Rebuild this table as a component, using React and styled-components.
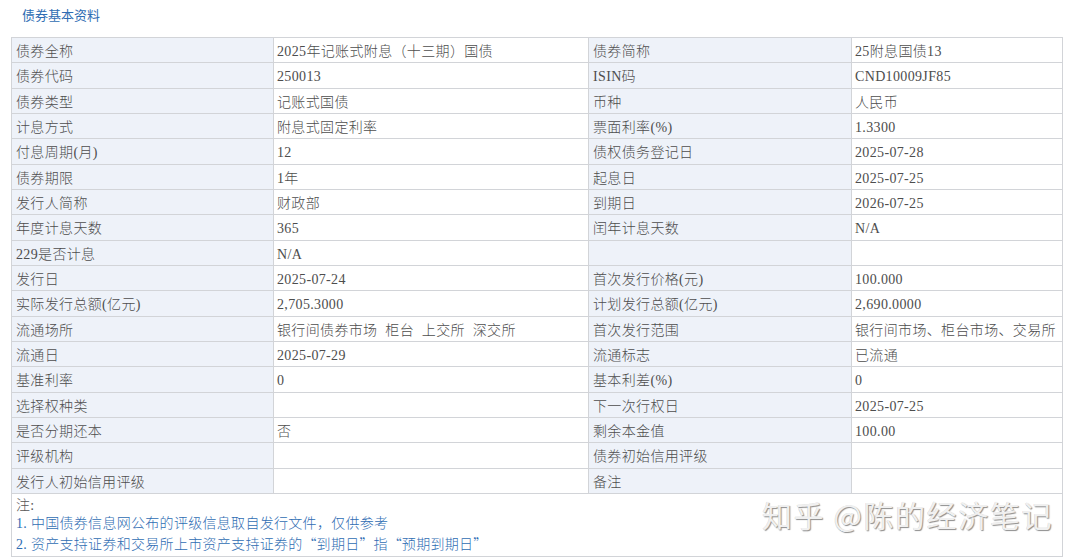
import React from "react";
import styled, { createGlobalStyle } from "styled-components";

const Global = createGlobalStyle`
  html, body { margin: 0; padding: 0; background: #fff; }
  body { font-family: "Liberation Serif", "Noto Sans CJK SC", serif; }
`;

const Page = styled.div`
  position: relative;
  width: 1080px;
  height: 560px;
  padding: 6px 0 0 11px;
  box-sizing: border-box;
`;

const Title = styled.div`
  font-family: "Noto Sans CJK SC", sans-serif;
  font-size: 13px;
  line-height: 18px;
  color: #2f6db3;
  padding-left: 11px;
  height: 31px;
`;

const Table = styled.table`
  border-collapse: collapse;
  table-layout: fixed;
  width: 1051px;
  font-size: 14px;
  color: #4d4d4d;
`;

const Row = styled.tr`
  height: 25.33px;
`;

const Cell = styled.td`
  border: 1px solid #d2d4d8;
  padding: 3px 0 0 ${(p) => (p.$label ? "4px" : "3px")};
  height: 21.33px;
  line-height: 21px;
  vertical-align: middle;
  white-space: nowrap;
  overflow: hidden;
  font-family: "Liberation Serif", "Noto Sans CJK SC", serif;
  font-size: 14px;
  font-weight: 300;
  letter-spacing: 0.35px;
  word-spacing: 4px;
  background: ${(p) => (p.$label ? "#eef2f9" : "#ffffff")};
`;

const NoteCell = styled.td`
  border: 1px solid #d2d4d8;
  padding: 3px 4px 2px;
  height: 55px;
  vertical-align: top;
  font-family: "Liberation Serif", "Noto Sans CJK SC", serif;
  font-size: 14px;
  font-weight: 300;
  line-height: 18.5px;
`;

const NoteLine = styled.div`
  color: ${(p) => (p.$blue ? "#2f6db3" : "#555")};
  letter-spacing: 0.3px;
  white-space: nowrap;
`;

const Quote = styled.span`
  font-family: "Noto Sans CJK SC", sans-serif;
  display: inline-block;
  width: 14px;
  text-align: ${(p) => (p.$open ? "right" : "left")};
`;

const Watermark = styled.div`
  position: absolute;
  right: 27px;
  top: 494px;
  font-family: "Noto Sans CJK SC", sans-serif;
  font-size: 30px;
  line-height: 40px;
  color: #f0f0f0;
  text-shadow: 1px 1px 1px rgba(0, 0, 0, 0.45), -0.5px -0.5px 0 rgba(0, 0, 0, 0.15);
  letter-spacing: 1.6px;
  white-space: pre;
`;

const rows = [
  ["债券全称", "2025年记账式附息（十三期）国债", "债券简称", "25附息国债13"],
  ["债券代码", "250013", "ISIN码", "CND10009JF85"],
  ["债券类型", "记账式国债", "币种", "人民币"],
  ["计息方式", "附息式固定利率", "票面利率(%)", "1.3300"],
  ["付息周期(月)", "12", "债权债务登记日", "2025-07-28"],
  ["债券期限", "1年", "起息日", "2025-07-25"],
  ["发行人简称", "财政部", "到期日", "2026-07-25"],
  ["年度计息天数", "365", "闰年计息天数", "N/A"],
  ["229是否计息", "N/A", "", ""],
  ["发行日", "2025-07-24", "首次发行价格(元)", "100.000"],
  ["实际发行总额(亿元)", "2,705.3000", "计划发行总额(亿元)", "2,690.0000"],
  ["流通场所", "银行间债券市场 柜台 上交所 深交所", "首次发行范围", "银行间市场、柜台市场、交易所"],
  ["流通日", "2025-07-29", "流通标志", "已流通"],
  ["基准利率", "0", "基本利差(%)", "0"],
  ["选择权种类", "", "下一次行权日", "2025-07-25"],
  ["是否分期还本", "否", "剩余本金值", "100.00"],
  ["评级机构", "", "债券初始信用评级", ""],
  ["发行人初始信用评级", "", "备注", ""],
];

export default function App() {
  return (
    <>
      <Global />
      <Page>
        <Title>债券基本资料</Title>
        <Table>
          <colgroup>
            <col style={{ width: 262 }} />
            <col style={{ width: 315 }} />
            <col style={{ width: 263 }} />
            <col style={{ width: 211 }} />
          </colgroup>
          <tbody>
            {rows.map((r, i) => (
              <Row key={i}>
                <Cell $label>{r[0]}</Cell>
                <Cell>{r[1]}</Cell>
                <Cell $label>{r[2]}</Cell>
                <Cell>{r[3]}</Cell>
              </Row>
            ))}
            <tr>
              <NoteCell colSpan={4}>
                <NoteLine>注:</NoteLine>
                <NoteLine $blue>1. 中国债券信息网公布的评级信息取自发行文件，仅供参考</NoteLine>
                <NoteLine $blue>
                  2. 资产支持证券和交易所上市资产支持证券的<Quote $open>“</Quote>到期日<Quote>”</Quote>指<Quote $open>“</Quote>预期到期日<Quote>”</Quote>
                </NoteLine>
              </NoteCell>
            </tr>
          </tbody>
        </Table>
        <Watermark>知乎 @陈的经济笔记</Watermark>
      </Page>
    </>
  );
}
